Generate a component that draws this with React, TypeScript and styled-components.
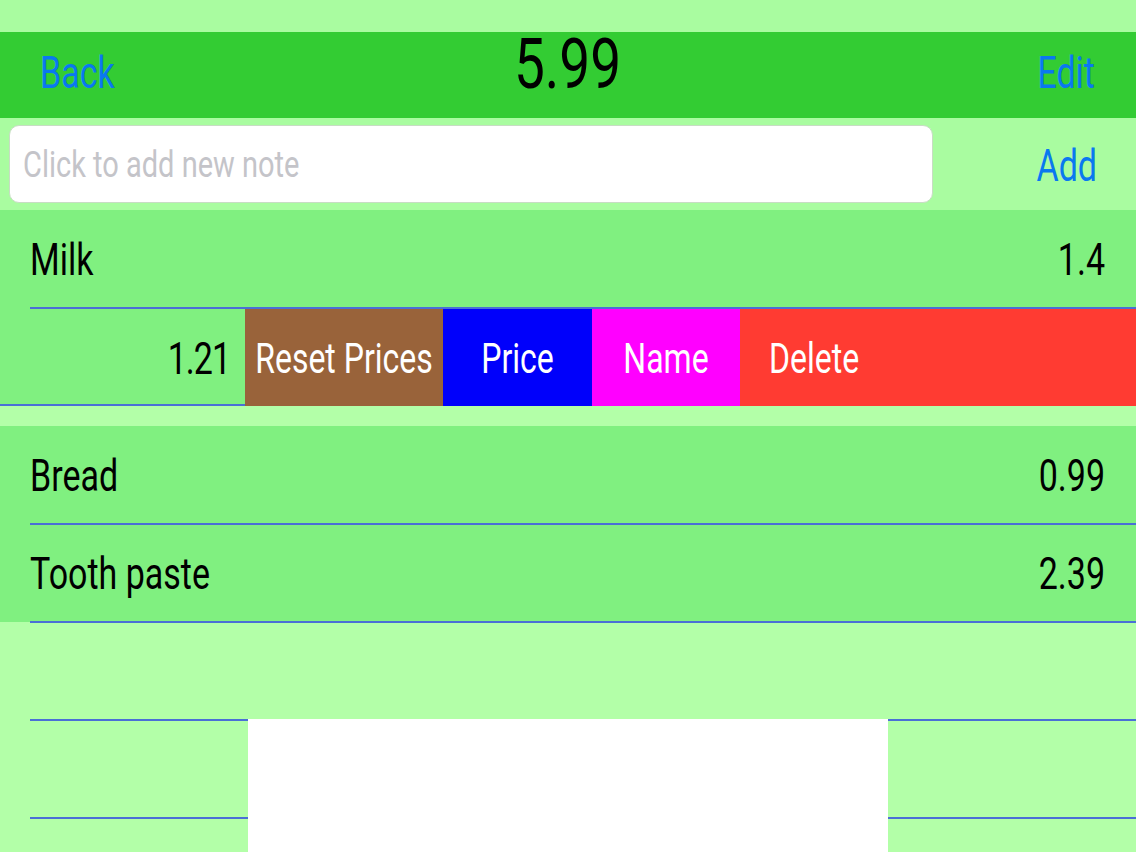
import React from "react";
import styled, { createGlobalStyle } from "styled-components";

const Global = createGlobalStyle`
  html, body { margin: 0; padding: 0; }
  body {
    background: #a9fca0;
    font-family: Roboto, "Liberation Sans", Arial, sans-serif;
    -webkit-font-smoothing: antialiased;
  }
`;

const Page = styled.div`
  position: relative;
  width: 1136px;
  height: 852px;
  overflow: hidden;
  background: #b3ffa8;
  display: flex;
  flex-direction: column;
`;

const TopGap = styled.div`
  height: 32px;
  background: #a9fca0;
  flex: none;
`;

const Tall = styled.span<{ $s?: number }>`
  display: inline-block;
  transform: scaleY(${(p) => p.$s ?? 1.3});
  line-height: 1;
  white-space: nowrap;
`;

const Header = styled.header`
  height: 86px;
  flex: none;
  box-sizing: border-box;
  background: #33cc33;
  display: grid;
  grid-template-columns: 1fr auto 1fr;
  align-items: center;
  padding: 0 41px 0 40px;
`;

const NavLink = styled.div<{ $align: "left" | "right" }>`
  color: #0a78f0;
  font-size: 34px;
  text-align: ${(p) => p.$align};
  padding-bottom: 6px;
`;

const Title = styled.div`
  color: #000;
  font-size: 55px;
  padding-bottom: 22px;
`;

const NoteBar = styled.div`
  height: 92px;
  flex: none;
  box-sizing: border-box;
  background: #a9fca0;
  display: flex;
  align-items: center;
  justify-content: space-between;
  padding: 0 39px 0 9px;
`;

const NoteField = styled.div`
  width: 924px;
  height: 78px;
  flex: none;
  box-sizing: border-box;
  background: #fff;
  border: 1px solid #c8dcc4;
  border-radius: 10px;
  display: flex;
  align-items: center;
  padding-left: 13px;
  color: #c4c4c9;
  font-size: 29px;
`;

const AddLink = styled.div`
  color: #0a78f0;
  font-size: 34px;
  padding-top: 2px;
`;

const Section = styled.section`
  background: #80f080;
  flex: none;
  display: flex;
  flex-direction: column;
`;

const Row = styled.div`
  position: relative;
  height: 98px;
  display: flex;
  align-items: center;
  justify-content: space-between;
  padding: 0 31px 0 30px;
  font-size: 34px;
  color: #000;
  &::after {
    content: "";
    position: absolute;
    left: 30px;
    right: 0;
    bottom: -1px;
    height: 2px;
    background: #4a6fd6;
  }
`;

const SwipeRow = styled.div`
  height: 98px;
  display: flex;
  align-items: stretch;
`;

const SwipeValue = styled.div`
  width: 245px;
  flex: none;
  box-sizing: border-box;
  border-bottom: 2px solid #4a6fd6;
  display: flex;
  align-items: center;
  justify-content: flex-end;
  padding: 4px 15px 0 0;
  font-size: 34px;
  letter-spacing: -1px;
  color: #000;
`;

const Action = styled.div<{ $bg: string; $w?: number; $left?: boolean }>`
  background: ${(p) => p.$bg};
  ${(p) => (p.$w ? `width: ${p.$w}px; flex: none;` : "flex: 1;")}
  display: flex;
  align-items: center;
  justify-content: ${(p) => (p.$left ? "flex-start" : "center")};
  padding-left: ${(p) => (p.$left ? "29px" : "0")};
  padding-top: 4px;
  color: #fff;
  font-size: 32px;
`;

const Gap = styled.div`
  height: 20px;
  flex: none;
  background: #b3ffa8;
`;

const Blank = styled.div`
  flex: 1;
  background: #b3ffa8;
  display: flex;
  flex-direction: column;
  padding-top: 1px;
`;

const BlankRow = styled.div`
  height: 98px;
  flex: none;
  box-sizing: border-box;
  margin-left: 30px;
  border-bottom: 2px solid #4a6fd6;
`;

const Popover = styled.div`
  position: absolute;
  left: 248px;
  top: 719px;
  width: 640px;
  height: 133px;
  background: #fff;
`;

const Item = ({ name, price }: { name: string; price: string }) => (
  <Row>
    <Tall>{name}</Tall>
    <Tall>{price}</Tall>
  </Row>
);

export default function App() {
  return (
    <>
      <Global />
      <Page>
        <TopGap />
        <Header>
          <NavLink $align="left">
            <Tall>Back</Tall>
          </NavLink>
          <Title>
            <Tall $s={1.28}>5.99</Tall>
          </Title>
          <NavLink $align="right">
            <Tall>Edit</Tall>
          </NavLink>
        </Header>
        <NoteBar>
          <NoteField>
            <Tall>Click to add new note</Tall>
          </NoteField>
          <AddLink>
            <Tall>Add</Tall>
          </AddLink>
        </NoteBar>
        <Section>
          <Item name="Milk" price="1.4" />
          <SwipeRow>
            <SwipeValue>
              <Tall>1.21</Tall>
            </SwipeValue>
            <Action $bg="#99633a" $w={198}>
              <Tall>Reset Prices</Tall>
            </Action>
            <Action $bg="#0000fb" $w={149}>
              <Tall>Price</Tall>
            </Action>
            <Action $bg="#ff00ff" $w={148}>
              <Tall>Name</Tall>
            </Action>
            <Action $bg="#ff3b32" $left>
              <Tall>Delete</Tall>
            </Action>
          </SwipeRow>
        </Section>
        <Gap />
        <Section>
          <Item name="Bread" price="0.99" />
          <Item name="Tooth paste" price="2.39" />
        </Section>
        <Blank>
          <BlankRow />
          <BlankRow />
        </Blank>
        <Popover />
      </Page>
    </>
  );
}
